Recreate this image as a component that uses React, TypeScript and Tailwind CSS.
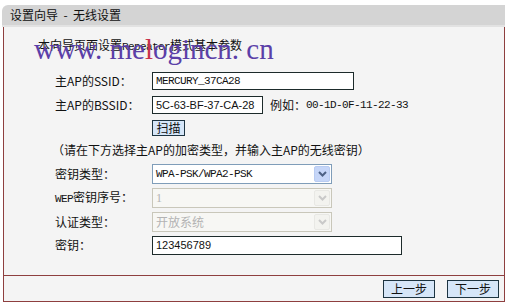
import React from "react";

const cjk = { fontFamily: '"Noto Sans CJK SC", "Noto Sans", sans-serif' };
const mono = { fontFamily: '"Liberation Mono", "DejaVu Sans Mono", monospace', fontSize: "11px", letterSpacing: "-0.6px" };
const sans = { fontFamily: '"Liberation Sans", Arial, sans-serif' };

function Chevron({ color }: { color: string }) {
  return (
    <svg width="9" height="6" viewBox="0 0 9 6">
      <path d="M1 1 L4.5 4.5 L8 1" stroke={color} strokeWidth="2" fill="none" />
    </svg>
  );
}

function Select({ text, disabled, textFont }: { text: string; disabled?: boolean; textFont?: React.CSSProperties }) {
  return (
    <div
      className={`flex h-[20px] w-[180px] items-center border ${
        disabled ? "border-[#c9c7ba] bg-[#f7f7f4]" : "border-[#7f9db9] bg-white"
      }`}
    >
      <div
        className={`flex-1 pl-[3px] leading-[18px] whitespace-nowrap ${disabled ? "text-[#b3b3b3]" : "text-[#111]"}`}
        style={textFont ?? mono}
      >
        {text}
      </div>
      <div
        className={`mr-[1px] flex h-[16px] w-[16px] items-center justify-center rounded-[2px] ${
          disabled ? "border border-[#e8e8e4] bg-[#f3f3ef]" : "border border-[#b9ccf2] bg-[#c6d6f8]"
        }`}
      >
        <Chevron color={disabled ? "#c9c9c9" : "#4d6185"} />
      </div>
    </div>
  );
}

function Label({ children }: { children: React.ReactNode }) {
  return (
    <div className="w-[97px] pl-[51px] box-content text-[12px] leading-[16px] text-[#111] whitespace-nowrap" style={cjk}>
      {children}
    </div>
  );
}

export default function App() {
  return (
    <div className="relative h-[306px] w-[514px] overflow-hidden bg-white">
      <div className="ml-[2px] pt-[5px] w-[503px]">
        {/* title bar */}
        <div className="flex h-[22px] items-center rounded-tl-[6px] border-b-[2px] border-[#e2e2e2] bg-[#d4d4d4] pl-[8px]">
          <span className="text-[12px] leading-[16px] text-[#111] whitespace-pre" style={cjk}>
            设置向导  -  无线设置
          </span>
        </div>
        {/* content */}
        <div className="ml-[1px] h-[248px] w-[502px] border-x border-[#8e3f3f] bg-[#f4f4f4]">
          <div className="pl-[34px] pt-[10px] text-[12px] leading-[16px] text-[#111] whitespace-nowrap" style={cjk}>
            本向导页面设置<span style={mono}>Repeater</span>模式基本参数
          </div>
          <div className="mt-[17px] flex flex-col">
            <div className="flex h-[24px] items-start">
              <div className="flex h-[18px] items-center">
                <Label>主AP的SSID：</Label>
              </div>
              <div className="h-[18px] w-[202px] border border-[#1d2b2b] bg-white pl-[3px] leading-[16px] text-[#111] whitespace-nowrap" style={mono}>
                MERCURY_37CA28
              </div>
            </div>
            <div className="flex h-[24px] items-start">
              <div className="flex h-[18px] items-center">
                <Label>主AP的BSSID：</Label>
              </div>
              <div className="h-[18px] w-[111px] overflow-hidden border border-[#1d2b2b] bg-white pl-[3px] text-[11px] leading-[16px] text-[#111] whitespace-nowrap" style={sans}>
                5C-63-BF-37-CA-28
              </div>
              <div className="ml-[7px] flex h-[18px] items-center text-[12px] text-[#111] whitespace-nowrap" style={cjk}>
                例如：<span style={mono}>00-1D-0F-11-22-33</span>
              </div>
            </div>
            <div className="flex h-[22px] items-start">
              <div className="w-[148px]" />
              <div className="flex h-[16px] w-[33px] items-center justify-center border border-[#1d3441] bg-[#d6e6f8] text-[12px] leading-[14px] text-[#111] whitespace-nowrap" style={cjk}>
                扫描
              </div>
            </div>
            <div className="flex h-[22px] items-start pl-[48px]">
              <div className="text-[12px] leading-[16px] text-[#111] whitespace-nowrap" style={cjk}>
                （请在下方选择主AP的加密类型，并输入主AP的无线密钥）
              </div>
            </div>
            <div className="flex h-[24px] items-start">
              <div className="flex h-[20px] items-center">
                <Label>密钥类型：</Label>
              </div>
              <Select text="WPA-PSK/WPA2-PSK" />
            </div>
            <div className="flex h-[24px] items-start">
              <div className="flex h-[20px] items-center">
                <Label>
                  <span style={mono}>WEP</span>密钥序号：
                </Label>
              </div>
              <Select text="1" disabled textFont={{ fontFamily: '"Liberation Serif", serif', fontSize: "12px" }} />
            </div>
            <div className="flex h-[24px] items-start">
              <div className="flex h-[20px] items-center">
                <Label>认证类型：</Label>
              </div>
              <Select text="开放系统" disabled textFont={{ ...cjk, fontSize: "12px" }} />
            </div>
            <div className="flex h-[24px] items-start">
              <div className="flex h-[18px] items-center">
                <Label>密钥：</Label>
              </div>
              <div className="h-[19px] w-[250px] border border-[#1d2b2b] bg-white pl-[3px] text-[11px] leading-[17px] text-[#111]" style={sans}>
                123456789
              </div>
            </div>
          </div>
        </div>
        {/* footer */}
        <div className="ml-[1px] flex h-[27px] w-[502px] items-center justify-end gap-[12px] border border-[#8e3f3f] bg-[#f4f4f4] pr-[5px]">
          <div className="flex h-[18px] w-[52px] items-center justify-center border border-[#1d3441] bg-[#d6e6f8] text-[12px] text-[#111]" style={cjk}>
            上一步
          </div>
          <div className="flex h-[18px] w-[52px] items-center justify-center border border-[#1d3441] bg-[#d6e6f8] text-[12px] text-[#111]" style={cjk}>
            下一步
          </div>
        </div>
      </div>
      {/* watermark */}
      <div
        className="pointer-events-none absolute left-[34px] top-[32px] text-[29px] leading-[34px] text-[#5b3fa8] whitespace-pre"
        style={{ fontFamily: '"Liberation Serif", "Times New Roman", serif' }}
      >
        www. me<span className="text-[#c8324a]">l</span>ogincn. cn
      </div>
    </div>
  );
}
